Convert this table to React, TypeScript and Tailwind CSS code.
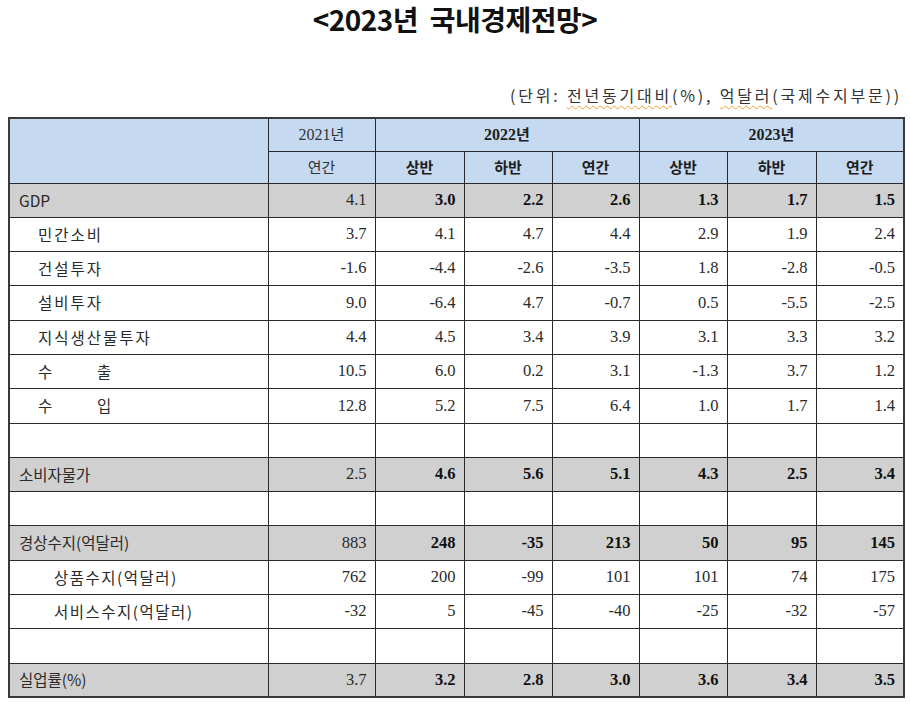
import React from "react";

type Row = {
  label: React.ReactNode;
  indent?: "sub" | "sub2";
  grey?: boolean;
  values?: string[];
};

const rows: Row[] = [
  { label: "GDP", grey: true, values: ["4.1", "3.0", "2.2", "2.6", "1.3", "1.7", "1.5"] },
  { label: "민간소비", indent: "sub", values: ["3.7", "4.1", "4.7", "4.4", "2.9", "1.9", "2.4"] },
  { label: "건설투자", indent: "sub", values: ["-1.6", "-4.4", "-2.6", "-3.5", "1.8", "-2.8", "-0.5"] },
  { label: "설비투자", indent: "sub", values: ["9.0", "-6.4", "4.7", "-0.7", "0.5", "-5.5", "-2.5"] },
  { label: "지식생산물투자", indent: "sub", values: ["4.4", "4.5", "3.4", "3.9", "3.1", "3.3", "3.2"] },
  {
    label: (
      <span className="flex">
        <span className="w-[59px]">수</span>
        <span>출</span>
      </span>
    ),
    indent: "sub",
    values: ["10.5", "6.0", "0.2", "3.1", "-1.3", "3.7", "1.2"],
  },
  {
    label: (
      <span className="flex">
        <span className="w-[59px]">수</span>
        <span>입</span>
      </span>
    ),
    indent: "sub",
    values: ["12.8", "5.2", "7.5", "6.4", "1.0", "1.7", "1.4"],
  },
  { label: "" },
  { label: "소비자물가", grey: true, values: ["2.5", "4.6", "5.6", "5.1", "4.3", "2.5", "3.4"] },
  { label: "" },
  { label: "경상수지(억달러)", grey: true, values: ["883", "248", "-35", "213", "50", "95", "145"] },
  { label: "상품수지(억달러)", indent: "sub2", values: ["762", "200", "-99", "101", "101", "74", "175"] },
  { label: "서비스수지(억달러)", indent: "sub2", values: ["-32", "5", "-45", "-40", "-25", "-32", "-57"] },
  { label: "" },
  { label: "실업률(%)", grey: true, values: ["3.7", "3.2", "2.8", "3.0", "3.6", "3.4", "3.5"] },
];

const kr = "font-['Noto_Sans_CJK_KR',sans-serif]";
const num = "font-['Liberation_Serif','Noto_Sans_CJK_KR',serif]";
const cell = "border border-[#2a2a2a] p-0";

export default function App() {
  return (
    <div className="w-[910px] h-[705px] bg-white text-[#1e1e1e] overflow-hidden">
      {/* Title */}
      <h1 className={`${kr} text-center text-[28px] font-bold leading-[38px] tracking-[-0.5px] text-[#111]`}>
        &lt;2023년&nbsp;&nbsp;국내경제전망&gt;
      </h1>

      {/* Unit */}
      <div className={`${kr} mt-[47px] pr-[8px] text-right text-[16px] leading-[20px] tracking-[2.8px] text-[#333]`}>
        (단위:{" "}
        <span className="underline decoration-wavy decoration-[#f0a030] decoration-1 underline-offset-[3px]">
          전년동기대비
        </span>
        (%),{" "}
        <span className="underline decoration-wavy decoration-[#f0a030] decoration-1 underline-offset-[3px]">
          억달러
        </span>
        (국제수지부문))
      </div>

      {/* Table */}
      <div className="pl-[8px] pt-[12px]">
        <table className="border-collapse table-fixed w-[895px] border-2 border-[#3a3a3a]">
          <colgroup>
            <col className="w-[259px]" />
            <col className="w-[107px]" />
            <col className="w-[89px]" />
            <col className="w-[88px]" />
            <col className="w-[87px]" />
            <col className="w-[88px]" />
            <col className="w-[89px]" />
            <col className="w-[88px]" />
          </colgroup>
          <thead className="bg-[#c5d9f1]">
            <tr className="h-[33px]">
              <th rowSpan={2} className={cell}></th>
              <th className={`${cell} ${num} text-[16px] font-normal text-[#333]`}>
                2021<span className={`${kr} text-[15px]`}>년</span>
              </th>
              <th colSpan={3} className={`${cell} ${num} text-[16px] font-bold`}>
                2022<span className={`${kr} text-[15px]`}>년</span>
              </th>
              <th colSpan={3} className={`${cell} ${num} text-[16px] font-bold`}>
                2023<span className={`${kr} text-[15px]`}>년</span>
              </th>
            </tr>
            <tr className={`h-[32px] ${kr} text-[15px]`}>
              <th className={`${cell} font-normal text-[#333]`}>연간</th>
              {["상반", "하반", "연간", "상반", "하반", "연간"].map((h, i) => (
                <th key={i} className={`${cell} font-bold`}>
                  {h}
                </th>
              ))}
            </tr>
          </thead>
          <tbody>
            {rows.map((r, ri) => (
              <tr key={ri} className={`h-[34.3px] ${r.grey ? "bg-[#d0d0d0]" : "bg-white"}`}>
                <td
                  className={`${cell} ${kr} text-[15.5px] ${
                    r.indent === "sub"
                      ? "pl-[28px] tracking-[2px]"
                      : r.indent === "sub2"
                      ? "pl-[44px] tracking-[1.5px]"
                      : "pl-[9px]"
                  } text-[#2a2a2a]`}
                >
                  {r.label}
                </td>
                {Array.from({ length: 7 }).map((_, ci) => (
                  <td
                    key={ci}
                    className={`${cell} ${num} text-right pr-[8px] text-[16.5px] ${
                      r.grey && ci > 0 ? "font-bold text-[#111]" : "text-[#2a2a2a]"
                    }`}
                  >
                    {r.values ? r.values[ci] : ""}
                  </td>
                ))}
              </tr>
            ))}
          </tbody>
        </table>
      </div>
    </div>
  );
}
